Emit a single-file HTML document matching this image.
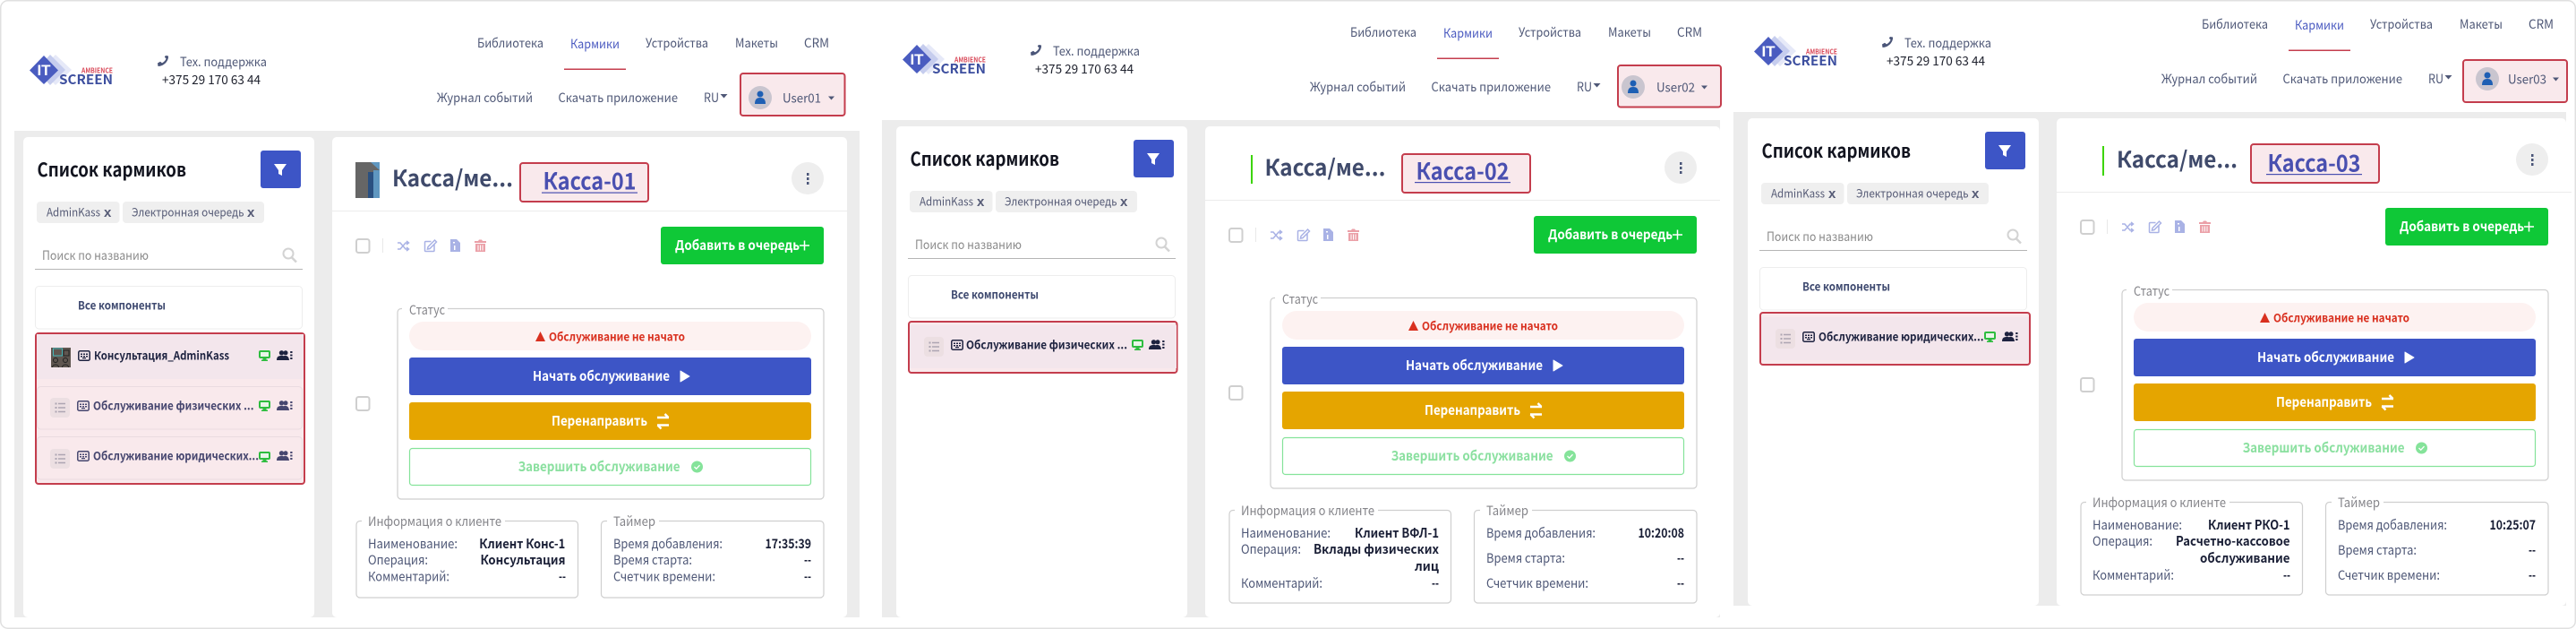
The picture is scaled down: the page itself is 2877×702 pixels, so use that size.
<!DOCTYPE html>
<html lang="ru"><head><meta charset="utf-8"><title>Кармики</title>
<style>
html,body{margin:0;padding:0;background:#fff;width:2877px;height:702px;overflow:hidden}
svg{display:block}
text{font-family:"Noto Sans CJK JP","Liberation Sans",sans-serif;white-space:pre}
.n{font-size:14px;fill:#4f5877}
.a{font-size:14px;fill:#4a5ac0}
.t{font-size:14px;fill:#4f5877}
.ph{font-size:14px;fill:#20232f}
.h{font-size:21px;font-weight:700;fill:#12141f}
.c{font-size:13px;fill:#565b76}
.x{font-size:15px;font-weight:700;fill:#565b76;font-family:"Liberation Sans",sans-serif}
.q{font-size:14px;fill:#8b8b8b}
.b{font-size:13px;font-weight:700;fill:#3f4a70}
.i1{font-size:13px;font-weight:700;fill:#1e2340}
.i2{font-size:13px;font-weight:700;fill:#46466f}
.tt{font-size:25px;font-weight:700;fill:#3f4a6b}
.k{font-size:26px;font-weight:700;fill:#4a50b0}
.w{font-size:15px;font-weight:700;fill:#fff}
.al{font-size:13px;font-weight:700;fill:#d9301f}
.f{font-size:15px;font-weight:700;fill:#8be0a0}
.l{font-size:14.5px;fill:#85858a}
.r{font-size:14.5px;fill:#4f5877}
.v{font-size:14.5px;font-weight:700;fill:#1a1f36}
</style></head><body>
<svg xmlns="http://www.w3.org/2000/svg" width="2877" height="702" viewBox="0 0 2877 702">
<defs>
<symbol id="kb" viewBox="0 0 14 12" overflow="visible"><rect x=".8" y=".8" width="12.4" height="10.4" rx="1.5" fill="none" stroke="currentColor" stroke-width="1.5"/><path d="M3 3.5h2v1.5H3zM6 3.5h2v1.5H6zM9 3.5h2v1.5H9zM3 6h2v1.5H3zM9 6h2v1.5H9zM5 8h4v1.2H5zM6 6h2v1.5H6z" fill="currentColor"/></symbol>
<symbol id="mon" viewBox="0 0 13 12" overflow="visible"><rect x="1" y="1" width="11" height="7" rx="1" fill="#e8f5e8" stroke="#2ebd3f" stroke-width="2"/><path d="M4.5 9h4v1.5h1.5V12H3v-1.5h1.5z" fill="#2ebd3f"/></symbol>
<symbol id="usr" viewBox="0 0 18 11" overflow="visible"><circle cx="5.5" cy="2.8" r="2.7" fill="currentColor"/><circle cx="10" cy="2.8" r="2.5" fill="currentColor"/><path d="M0 11c0-4 2-5 5.500-5s5.500 1 5.500 5z" fill="currentColor"/><path d="M8 6c3-.6 5.500.6 6 5h-3z" fill="currentColor"/><path d="M15.200 1h2.300v2h-2.300zM15.200 4.500h2.300v2h-2.300zM15.200 8h2.300v2h-2.300z" fill="currentColor"/></symbol>
<symbol id="lst" viewBox="0 0 22 22" overflow="visible"><rect width="22" height="22" rx="4" fill="#ecdfe2"/><path d="M9 6.500h8M9 11h8M9 15.500h8" stroke="#ada5b2" stroke-width="1.600"/><path d="M5.500 5.500h2v2h-2zM5.500 10h2v2h-2zM5.500 14.500h2v2h-2z" fill="#ada5b2"/></symbol>
<g id="base">
<polygon points="62,61 80,78 62,95 45,78" fill="#e6e9f8"/>
<polygon points="56,61 73,78 56,95 40,78" fill="#c6cdee"/>
<polygon points="49,62 65,78.500 49,94 33,78.500" fill="#4a5cc0"/>
<path d="M176 70.500L179 68.800L181 70.400C183.500 69 185 67 185.500 65.500L183.800 63.500L185 62L188 62.500C188.500 68 183 74 176.500 74Z" fill="#4a5578"/>
<rect x="630" y="76.500" width="69" height="1.500" fill="#c43d4d"/>
<path d="M804.500 105h8l-4 4.500z" fill="#4f5877"/>
<rect x="291" y="168" width="45" height="42" rx="3" fill="#3d55c6"/>
<path d="M306 183h14l-5 7v6l-4-2v-4z" fill="#fff"/>
<rect x="41" y="225" width="92.500" height="24" rx="4" fill="#efefef"/>
<rect x="137" y="225" width="158" height="24" rx="4" fill="#efefef"/>
<circle cx="322" cy="283" r="5.500" fill="none" stroke="#d3d3d3" stroke-width="2"/><path d="M326 287.500l5 5" stroke="#d3d3d3" stroke-width="2.500"/>
<rect x="39" y="300" width="299" height="1" fill="#b5b5b5"/>
<rect x="39.500" y="319.500" width="298" height="47.500" rx="4" fill="#fff" stroke="#ededed"/>
<rect x="371" y="235" width="575" height="1" fill="#ececec"/>
<rect x="884" y="181" width="36" height="36" rx="18" fill="#eeeeee"/>
<path d="M901 193h2.500v3h-2.500zM901 198h2.500v3h-2.500zM901 203h2.500v3h-2.500z" fill="#4a5578"/>
<rect x="398" y="267" width="14.500" height="15" rx="2.500" fill="#fff" stroke="#cfcfcf" stroke-width="2"/>
<rect x="427" y="266" width="1" height="16" fill="#e8e8e8"/>
<g fill="none" stroke="#a9b2e5" stroke-width="1.500"><path d="M444 271h3l6 7h3M444 278h3l6-7h3M454 269l2.500 2-2.500 2M454 276l2.500 2-2.500 2"/><path d="M485 273v6.500a1 1 0 0 1-1 1h-8.500a1 1 0 0 1-1-1v-9a1 1 0 0 1 1-1h6M478 275.500l7.500-7.500 2 2-7.500 7.500-2.500.5z"/></g>
<path d="M503 267h7l4 4v10h-11z" fill="#a9b2e5"/><path d="M506 270h2v1.500h-2zM507 274h1.500v5h-1.500z" fill="#fff"/>
<path d="M530 269h4l1-1.500h3l1 1.500h4v2h-13zM531 272h11v9h-11z" fill="#eba0a8"/><path d="M534 273.500v6M536.500 273.500v6M539 273.500v6" stroke="#fff"/>
<rect x="738" y="253" width="182" height="42" rx="3" fill="#0fc837"/>
<path d="M893 274h11M898.500 268.500v11" stroke="#fff" stroke-width="1.500"/>
<rect x="444" y="344.500" width="476" height="212.500" rx="4" fill="#fff" stroke="#cfcfcf" stroke-width="1.200"/>
<rect x="449" y="342" width="51" height="5" fill="#fff"/>
<rect x="457" y="359" width="449" height="32" rx="16" fill="#fdf2f1"/>
<path d="M598 381l5.500-11 5.500 11z" fill="#d9301f"/>
<rect x="457" y="399" width="449" height="42" rx="3" fill="#3d55c6"/>
<path d="M760 414l10 6-10 6z" fill="#fff" stroke="#fff" stroke-linejoin="round"/>
<rect x="457" y="449" width="449" height="42" rx="3" fill="#e5a500"/>
<path d="M734 466h13M742.500 462l4 4M747 474.500h-13M738.500 478.500l-4-4" fill="none" stroke="#fff" stroke-width="2.400"/>
<rect x="457.500" y="500.500" width="448" height="41" rx="3" fill="#fff" stroke="#85e39a" stroke-width="1.200"/>
<circle cx="778.500" cy="521" r="6.500" fill="#85e39a"/><path d="M775.500 521l2.200 2.200 3.800-4" fill="none" stroke="#fff" stroke-width="1.300"/>
<rect x="398" y="443" width="14.500" height="15" rx="2.500" fill="#fff" stroke="#cfcfcf" stroke-width="2"/>
</g>
</defs>

<!-- PANEL 1 -->
<g>
<rect x="16" y="146" width="944" height="543" fill="#ececec"/>
<rect x="26" y="153" width="325" height="536" rx="5" fill="#fff"/>
<rect x="371" y="153" width="575" height="536" rx="5" fill="#fff"/>
<use href="#base"/>
<text x="49" y="84" text-anchor="middle" style="fill:#fff;font-size:17px;font-weight:700;font-family:'Liberation Sans',sans-serif">IT</text>
<text x="91" y="81.500" style="font-size:8px;font-weight:700;fill:#d94a5a" textLength="35" lengthAdjust="spacingAndGlyphs">AMBIENCE</text>
<text x="66" y="94" style="font-size:14.500px;font-weight:700;fill:#3d4f9f" textLength="60" lengthAdjust="spacingAndGlyphs">SCREEN</text>
<text class="t" x="201" y="74" textLength="97" lengthAdjust="spacingAndGlyphs">Тех. поддержка</text>
<text class="ph" x="181" y="94" textLength="110" lengthAdjust="spacingAndGlyphs">+375 29 170 63 44</text>
<text class="n" x="533" y="53" textLength="74" lengthAdjust="spacingAndGlyphs">Библиотека</text>
<text class="a" x="637" y="54" textLength="55" lengthAdjust="spacingAndGlyphs">Кармики</text>
<text class="n" x="721" y="53" textLength="70" lengthAdjust="spacingAndGlyphs">Устройства</text>
<text class="n" x="821" y="53" textLength="48" lengthAdjust="spacingAndGlyphs">Макеты</text>
<text class="n" x="898" y="53" textLength="28" lengthAdjust="spacingAndGlyphs">CRM</text>
<text class="n" x="488" y="114" textLength="107" lengthAdjust="spacingAndGlyphs">Журнал событий</text>
<text class="n" x="623.500" y="114" textLength="133.500" lengthAdjust="spacingAndGlyphs">Скачать приложение</text>
<text class="n" x="786" y="114" textLength="17" lengthAdjust="spacingAndGlyphs">RU</text>
<rect x="827" y="82" width="116.500" height="47" rx="3" fill="#f9e9ec" stroke="#c43d4d" stroke-width="2"/>
<circle cx="849" cy="109" r="13" fill="#c9c5cf"/><circle cx="849" cy="105" r="3.500" fill="#1e5fb4"/><path d="M843 116c0-5 2-7 6-7s6 2 6 7z" fill="#1e5fb4"/><path d="M925 107.500h7l-3.500 4z" fill="#4f5877"/>
<text class="n" x="874" y="114.500" textLength="43" lengthAdjust="spacingAndGlyphs">User01</text>
<text class="h" x="41.500" y="197" textLength="166.500" lengthAdjust="spacingAndGlyphs">Список кармиков</text>
<text class="c" x="52" y="241.500" textLength="60" lengthAdjust="spacingAndGlyphs">AdminKass</text><text class="x" x="116" y="242">x</text>
<text class="c" x="147" y="241.500" textLength="125.500" lengthAdjust="spacingAndGlyphs">Электронная очередь</text><text class="x" x="276" y="242">x</text>
<text class="q" x="47" y="290" textLength="119" lengthAdjust="spacingAndGlyphs">Поиск по названию</text>
<text class="b" x="87" y="345.500" textLength="98" lengthAdjust="spacingAndGlyphs">Все компоненты</text>
<rect x="40" y="372" width="300" height="168" rx="3" fill="#f9e9ec" stroke="#c43d4d" stroke-width="2"/>
<rect x="41" y="373" width="298" height="50" fill="#f3e6ec"/>
<rect x="41.500" y="431.500" width="296" height="47.500" rx="4" fill="none" stroke="#eadbe0"/>
<rect x="41.500" y="487.500" width="296" height="47.500" rx="4" fill="none" stroke="#eadbe0"/>
<rect x="57" y="388" width="22" height="22" fill="#5f5650"/><rect x="59.500" y="389" width="10" height="8" fill="none" stroke="#44b6b8"/><circle cx="62" cy="402" r="2.500" fill="none" stroke="#222"/><circle cx="73" cy="402" r="2.500" fill="none" stroke="#222"/><path d="M58.500 410c0-4 7-4 7 0M69.500 410c0-4 7-4 7 0M71 391h6v6h-6z" fill="none" stroke="#222"/>
<use href="#kb" x="87" y="391" width="14" height="12" color="#1e2340"/>
<text class="i1" x="105" y="401.500" textLength="151" lengthAdjust="spacingAndGlyphs">Консультация_AdminKass</text>
<use href="#mon" x="289" y="391" width="13" height="12"/><use href="#usr" x="309" y="391" width="18" height="11" color="#1e2340"/>
<use href="#lst" x="56" y="444" width="22" height="22"/>
<use href="#kb" x="86" y="447" width="14" height="12" color="#46466f"/>
<text class="i2" x="104" y="457.500" textLength="179.500" lengthAdjust="spacingAndGlyphs">Обслуживание физических ...</text>
<use href="#mon" x="289" y="447" width="13" height="12"/><use href="#usr" x="309" y="447" width="18" height="11" color="#46466f"/>
<use href="#lst" x="56" y="501" width="22" height="22"/>
<use href="#kb" x="86" y="503" width="14" height="12" color="#46466f"/>
<text class="i2" x="104" y="513.500" textLength="185" lengthAdjust="spacingAndGlyphs">Обслуживание юридических...</text>
<use href="#mon" x="289" y="504" width="13" height="12"/><use href="#usr" x="309" y="503" width="18" height="11" color="#46466f"/>
<rect x="397" y="181" width="27" height="40" fill="#666"/><rect x="411" y="192" width="6" height="29" fill="#2a5080"/><rect x="417" y="190" width="7" height="31" fill="#5f97c0"/><path d="M414 181h10v9z" fill="#5f97c0"/>
<text class="tt" x="438" y="208" textLength="135" lengthAdjust="spacingAndGlyphs">Касса/ме...</text>
<rect x="581" y="182" width="143" height="43" rx="3" fill="#f9e9ec" stroke="#c43d4d" stroke-width="2"/>
<text class="k" x="606.500" y="211.500" textLength="104" lengthAdjust="spacingAndGlyphs">Касса-01</text><rect x="605" y="214.500" width="107" height="1.200" fill="#4a50b0"/>
<text class="w" x="754" y="279" textLength="139" lengthAdjust="spacingAndGlyphs">Добавить в очередь</text>
<text class="l" x="457" y="351" textLength="40" lengthAdjust="spacingAndGlyphs">Статус</text>
<text class="al" x="613" y="380.500" textLength="152" lengthAdjust="spacingAndGlyphs">Обслуживание не начато</text>
<text class="w" x="595" y="425" textLength="153" lengthAdjust="spacingAndGlyphs">Начать обслуживание</text>
<text class="w" x="616" y="475" textLength="107" lengthAdjust="spacingAndGlyphs">Перенаправить</text>
<text class="f" x="578.600" y="526" textLength="181" lengthAdjust="spacingAndGlyphs">Завершить обслуживание</text>
<rect x="398" y="581.500" width="247.500" height="85.500" rx="4" fill="#fff" stroke="#cfcfcf" stroke-width="1.200"/>
<rect x="404" y="579" width="160" height="5" fill="#fff"/>
<text class="l" x="411" y="587" textLength="149" lengthAdjust="spacingAndGlyphs">Информация о клиенте</text>
<text class="r" x="411" y="612" textLength="100" lengthAdjust="spacingAndGlyphs">Наименование:</text>
<text class="r" x="411" y="630" textLength="67" lengthAdjust="spacingAndGlyphs">Операция:</text>
<text class="r" x="411" y="648.500" textLength="91" lengthAdjust="spacingAndGlyphs">Комментарий:</text>
<text class="v" x="535.300" y="612" textLength="96" lengthAdjust="spacingAndGlyphs">Клиент Конс-1</text>
<text class="v" x="536.500" y="630" textLength="95" lengthAdjust="spacingAndGlyphs">Консультация</text>
<text class="v" x="624" y="648.500" textLength="8" lengthAdjust="spacingAndGlyphs">--</text>
<rect x="671.500" y="581.500" width="248.500" height="85.500" rx="4" fill="#fff" stroke="#cfcfcf" stroke-width="1.200"/>
<rect x="678" y="579" width="58" height="5" fill="#fff"/>
<text class="l" x="685" y="587" textLength="47" lengthAdjust="spacingAndGlyphs">Таймер</text>
<text class="r" x="685" y="612" textLength="122" lengthAdjust="spacingAndGlyphs">Время добавления:</text>
<text class="r" x="685" y="630" textLength="88" lengthAdjust="spacingAndGlyphs">Время старта:</text>
<text class="r" x="685" y="648.500" textLength="114" lengthAdjust="spacingAndGlyphs">Счетчик времени:</text>
<text class="v" x="854.500" y="612" textLength="51.500" lengthAdjust="spacingAndGlyphs">17:35:39</text>
<text class="v" x="898" y="630" textLength="8" lengthAdjust="spacingAndGlyphs">--</text>
<text class="v" x="898" y="648.500" textLength="8" lengthAdjust="spacingAndGlyphs">--</text>
</g>

<!-- PANEL 2 -->
<g transform="translate(975,-12)">
<rect x="10" y="146" width="936" height="555" fill="#ececec"/>
<rect x="26" y="153" width="325" height="548" rx="5" fill="#fff"/>
<rect x="371" y="153" width="575" height="548" rx="5" fill="#fff"/>
<use href="#base"/>
<text x="49" y="84" style="fill:#fff;font-size:17px;font-weight:700;font-family:'Liberation Sans',sans-serif" text-anchor="middle">IT</text>
<text x="91" y="81.500" style="font-size:8px;font-weight:700;fill:#d94a5a" textLength="35" lengthAdjust="spacingAndGlyphs">AMBIENCE</text>
<text x="66" y="94" style="font-size:14.500px;font-weight:700;fill:#3d4f9f" textLength="60" lengthAdjust="spacingAndGlyphs">SCREEN</text>
<text class="t" x="201" y="74" textLength="97" lengthAdjust="spacingAndGlyphs">Тех. поддержка</text>
<text class="ph" x="181" y="94" textLength="110" lengthAdjust="spacingAndGlyphs">+375 29 170 63 44</text>
<text class="n" x="533" y="53" textLength="74" lengthAdjust="spacingAndGlyphs">Библиотека</text>
<text class="a" x="637" y="54" textLength="55" lengthAdjust="spacingAndGlyphs">Кармики</text>
<text class="n" x="721" y="53" textLength="70" lengthAdjust="spacingAndGlyphs">Устройства</text>
<text class="n" x="821" y="53" textLength="48" lengthAdjust="spacingAndGlyphs">Макеты</text>
<text class="n" x="898" y="53" textLength="28" lengthAdjust="spacingAndGlyphs">CRM</text>
<text class="n" x="488" y="114" textLength="107" lengthAdjust="spacingAndGlyphs">Журнал событий</text>
<text class="n" x="623.500" y="114" textLength="133.500" lengthAdjust="spacingAndGlyphs">Скачать приложение</text>
<text class="n" x="786" y="114" textLength="17" lengthAdjust="spacingAndGlyphs">RU</text>
<rect x="832" y="85" width="115" height="46.500" rx="3" fill="#f9e9ec" stroke="#c43d4d" stroke-width="2"/>
<circle cx="849" cy="109" r="13" fill="#c9c5cf"/><circle cx="849" cy="105" r="3.500" fill="#1e5fb4"/><path d="M843 116c0-5 2-7 6-7s6 2 6 7z" fill="#1e5fb4"/><path d="M925 107.500h7l-3.500 4z" fill="#4f5877"/>
<text class="n" x="875" y="114.500" textLength="43" lengthAdjust="spacingAndGlyphs">User02</text>
<text class="h" x="41.500" y="197" textLength="166.500" lengthAdjust="spacingAndGlyphs">Список кармиков</text>
<text class="c" x="52" y="241.500" textLength="60" lengthAdjust="spacingAndGlyphs">AdminKass</text><text class="x" x="116" y="242">x</text>
<text class="c" x="147" y="241.500" textLength="125.500" lengthAdjust="spacingAndGlyphs">Электронная очередь</text><text class="x" x="276" y="242">x</text>
<text class="q" x="47" y="290" textLength="119" lengthAdjust="spacingAndGlyphs">Поиск по названию</text>
<text class="b" x="87" y="345.500" textLength="98" lengthAdjust="spacingAndGlyphs">Все компоненты</text>
<rect x="40" y="371" width="299.500" height="57" rx="3" fill="#f9e9ec" stroke="#c43d4d" stroke-width="2"/>
<rect x="41" y="375" width="298" height="48" fill="#f3e6ec"/>
<use href="#lst" x="57" y="388" width="22" height="22"/>
<use href="#kb" x="87" y="391" width="14" height="12" color="#1e2340"/>
<text class="i1" x="104" y="401.500" textLength="180" lengthAdjust="spacingAndGlyphs">Обслуживание физических ...</text>
<use href="#mon" x="289" y="391" width="13" height="12"/><use href="#usr" x="308" y="391" width="18" height="11" color="#1e2340"/>
<rect x="422" y="185" width="2" height="32" fill="#3cd400"/>
<text class="tt" x="437.500" y="208" textLength="135" lengthAdjust="spacingAndGlyphs">Касса/ме...</text>
<rect x="591" y="184" width="143" height="43" rx="3" fill="#f9e9ec" stroke="#c43d4d" stroke-width="2"/>
<text class="k" x="606.500" y="212.500" textLength="104" lengthAdjust="spacingAndGlyphs">Касса-02</text><rect x="605" y="215" width="107" height="1.200" fill="#4a50b0"/>
<text class="w" x="754" y="279" textLength="139" lengthAdjust="spacingAndGlyphs">Добавить в очередь</text>
<text class="l" x="457" y="351" textLength="40" lengthAdjust="spacingAndGlyphs">Статус</text>
<text class="al" x="613" y="380.500" textLength="152" lengthAdjust="spacingAndGlyphs">Обслуживание не начато</text>
<text class="w" x="595" y="425" textLength="153" lengthAdjust="spacingAndGlyphs">Начать обслуживание</text>
<text class="w" x="616" y="475" textLength="107" lengthAdjust="spacingAndGlyphs">Перенаправить</text>
<text class="f" x="578.600" y="526" textLength="181" lengthAdjust="spacingAndGlyphs">Завершить обслуживание</text>
<rect x="398" y="581.500" width="247.500" height="103.500" rx="4" fill="#fff" stroke="#cfcfcf" stroke-width="1.200"/>
<rect x="404" y="579" width="160" height="5" fill="#fff"/>
<text class="l" x="411" y="587" textLength="149" lengthAdjust="spacingAndGlyphs">Информация о клиенте</text>
<text class="r" x="411" y="612" textLength="100" lengthAdjust="spacingAndGlyphs">Наименование:</text>
<text class="r" x="411" y="630" textLength="67" lengthAdjust="spacingAndGlyphs">Операция:</text>
<text class="r" x="411" y="668" textLength="91" lengthAdjust="spacingAndGlyphs">Комментарий:</text>
<text class="v" x="538" y="612" textLength="94" lengthAdjust="spacingAndGlyphs">Клиент ВФЛ-1</text>
<text class="v" x="492" y="630" textLength="140" lengthAdjust="spacingAndGlyphs">Вклады физических</text>
<text class="v" x="605" y="649" textLength="27" lengthAdjust="spacingAndGlyphs">лиц</text>
<text class="v" x="624" y="668" textLength="8" lengthAdjust="spacingAndGlyphs">--</text>
<rect x="671.500" y="581.500" width="248.500" height="103.500" rx="4" fill="#fff" stroke="#cfcfcf" stroke-width="1.200"/>
<rect x="678" y="579" width="58" height="5" fill="#fff"/>
<text class="l" x="685" y="587" textLength="47" lengthAdjust="spacingAndGlyphs">Таймер</text>
<text class="r" x="685" y="612" textLength="122" lengthAdjust="spacingAndGlyphs">Время добавления:</text>
<text class="r" x="685" y="640" textLength="88" lengthAdjust="spacingAndGlyphs">Время старта:</text>
<text class="r" x="685" y="668" textLength="114" lengthAdjust="spacingAndGlyphs">Счетчик времени:</text>
<text class="v" x="854.500" y="612" textLength="51.500" lengthAdjust="spacingAndGlyphs">10:20:08</text>
<text class="v" x="898" y="640" textLength="8" lengthAdjust="spacingAndGlyphs">--</text>
<text class="v" x="898" y="668" textLength="8" lengthAdjust="spacingAndGlyphs">--</text>
</g>

<!-- PANEL 3 -->
<g transform="translate(1926,-21)">
<rect x="10" y="146" width="930" height="551" fill="#ececec"/>
<rect x="26" y="153" width="325" height="544" rx="5" fill="#fff"/>
<rect x="371" y="153" width="569" height="544" rx="5" fill="#fff"/>
<use href="#base"/>
<text x="49" y="84" style="fill:#fff;font-size:17px;font-weight:700;font-family:'Liberation Sans',sans-serif" text-anchor="middle">IT</text>
<text x="91" y="81.500" style="font-size:8px;font-weight:700;fill:#d94a5a" textLength="35" lengthAdjust="spacingAndGlyphs">AMBIENCE</text>
<text x="66" y="94" style="font-size:14.500px;font-weight:700;fill:#3d4f9f" textLength="60" lengthAdjust="spacingAndGlyphs">SCREEN</text>
<text class="t" x="201" y="74" textLength="97" lengthAdjust="spacingAndGlyphs">Тех. поддержка</text>
<text class="ph" x="181" y="94" textLength="110" lengthAdjust="spacingAndGlyphs">+375 29 170 63 44</text>
<text class="n" x="533" y="53" textLength="74" lengthAdjust="spacingAndGlyphs">Библиотека</text>
<text class="a" x="637" y="54" textLength="55" lengthAdjust="spacingAndGlyphs">Кармики</text>
<text class="n" x="721" y="53" textLength="70" lengthAdjust="spacingAndGlyphs">Устройства</text>
<text class="n" x="821" y="53" textLength="48" lengthAdjust="spacingAndGlyphs">Макеты</text>
<text class="n" x="898" y="53" textLength="28" lengthAdjust="spacingAndGlyphs">CRM</text>
<text class="n" x="488" y="114" textLength="107" lengthAdjust="spacingAndGlyphs">Журнал событий</text>
<text class="n" x="623.500" y="114" textLength="133.500" lengthAdjust="spacingAndGlyphs">Скачать приложение</text>
<text class="n" x="786" y="114" textLength="17" lengthAdjust="spacingAndGlyphs">RU</text>
<rect x="825" y="88" width="116" height="47" rx="3" fill="#f9e9ec" stroke="#c43d4d" stroke-width="2"/>
<circle cx="852" cy="109" r="13" fill="#c9c5cf"/><circle cx="852" cy="105" r="3.500" fill="#1e5fb4"/><path d="M846 116c0-5 2-7 6-7s6 2 6 7z" fill="#1e5fb4"/><path d="M925 107.500h7l-3.500 4z" fill="#4f5877"/>
<text class="n" x="875" y="114.500" textLength="43" lengthAdjust="spacingAndGlyphs">User03</text>
<text class="h" x="41.500" y="197" textLength="166.500" lengthAdjust="spacingAndGlyphs">Список кармиков</text>
<text class="c" x="52" y="241.500" textLength="60" lengthAdjust="spacingAndGlyphs">AdminKass</text><text class="x" x="116" y="242">x</text>
<text class="c" x="147" y="241.500" textLength="125.500" lengthAdjust="spacingAndGlyphs">Электронная очередь</text><text class="x" x="276" y="242">x</text>
<text class="q" x="47" y="290" textLength="119" lengthAdjust="spacingAndGlyphs">Поиск по названию</text>
<text class="b" x="87" y="345.500" textLength="98" lengthAdjust="spacingAndGlyphs">Все компоненты</text>
<rect x="40" y="370" width="301" height="58" rx="3" fill="#f9e9ec" stroke="#c43d4d" stroke-width="2"/>
<rect x="41" y="375" width="299" height="48" fill="#f3e6ec"/>
<use href="#lst" x="57" y="388" width="22" height="22"/>
<use href="#kb" x="87" y="391" width="14" height="12" color="#1e2340"/>
<text class="i1" x="105" y="401.500" textLength="184.500" lengthAdjust="spacingAndGlyphs">Обслуживание юридических...</text>
<use href="#mon" x="290" y="391" width="13" height="12"/><use href="#usr" x="310" y="391" width="18" height="11" color="#1e2340"/>
<rect x="422" y="184" width="2" height="33" fill="#3cd400"/>
<text class="tt" x="438" y="208" textLength="135" lengthAdjust="spacingAndGlyphs">Касса/ме...</text>
<rect x="588" y="182" width="143" height="43" rx="3" fill="#f9e9ec" stroke="#c43d4d" stroke-width="2"/>
<text class="k" x="606.500" y="212.500" textLength="104" lengthAdjust="spacingAndGlyphs">Касса-03</text><rect x="605" y="215" width="107" height="1.200" fill="#4a50b0"/>
<text class="w" x="754" y="279" textLength="139" lengthAdjust="spacingAndGlyphs">Добавить в очередь</text>
<text class="l" x="457" y="351" textLength="40" lengthAdjust="spacingAndGlyphs">Статус</text>
<text class="al" x="613" y="380.500" textLength="152" lengthAdjust="spacingAndGlyphs">Обслуживание не начато</text>
<text class="w" x="595" y="425" textLength="153" lengthAdjust="spacingAndGlyphs">Начать обслуживание</text>
<text class="w" x="616" y="475" textLength="107" lengthAdjust="spacingAndGlyphs">Перенаправить</text>
<text class="f" x="578.600" y="526" textLength="181" lengthAdjust="spacingAndGlyphs">Завершить обслуживание</text>
<rect x="398" y="581.500" width="247.500" height="103.500" rx="4" fill="#fff" stroke="#cfcfcf" stroke-width="1.200"/>
<rect x="404" y="579" width="160" height="5" fill="#fff"/>
<text class="l" x="411" y="587" textLength="149" lengthAdjust="spacingAndGlyphs">Информация о клиенте</text>
<text class="r" x="411" y="612" textLength="100" lengthAdjust="spacingAndGlyphs">Наименование:</text>
<text class="r" x="411" y="630" textLength="67" lengthAdjust="spacingAndGlyphs">Операция:</text>
<text class="r" x="411" y="668" textLength="91" lengthAdjust="spacingAndGlyphs">Комментарий:</text>
<text class="v" x="540" y="612" textLength="91.500" lengthAdjust="spacingAndGlyphs">Клиент РКО-1</text>
<text class="v" x="504" y="630" textLength="127.500" lengthAdjust="spacingAndGlyphs">Расчетно-кассовое</text>
<text class="v" x="531" y="649" textLength="100.500" lengthAdjust="spacingAndGlyphs">обслуживание</text>
<text class="v" x="624" y="668" textLength="8" lengthAdjust="spacingAndGlyphs">--</text>
<rect x="671.500" y="581.500" width="248.500" height="103.500" rx="4" fill="#fff" stroke="#cfcfcf" stroke-width="1.200"/>
<rect x="678" y="579" width="58" height="5" fill="#fff"/>
<text class="l" x="685" y="587" textLength="47" lengthAdjust="spacingAndGlyphs">Таймер</text>
<text class="r" x="685" y="612" textLength="122" lengthAdjust="spacingAndGlyphs">Время добавления:</text>
<text class="r" x="685" y="640" textLength="88" lengthAdjust="spacingAndGlyphs">Время старта:</text>
<text class="r" x="685" y="668" textLength="114" lengthAdjust="spacingAndGlyphs">Счетчик времени:</text>
<text class="v" x="854.500" y="612" textLength="51.500" lengthAdjust="spacingAndGlyphs">10:25:07</text>
<text class="v" x="898" y="640" textLength="8" lengthAdjust="spacingAndGlyphs">--</text>
<text class="v" x="898" y="668" textLength="8" lengthAdjust="spacingAndGlyphs">--</text>
</g>
<rect x=".75" y=".75" width="2875.500" height="700.500" rx="8" fill="none" stroke="#e0e0e0" stroke-width="1.500"/>
</svg>
</body></html>
